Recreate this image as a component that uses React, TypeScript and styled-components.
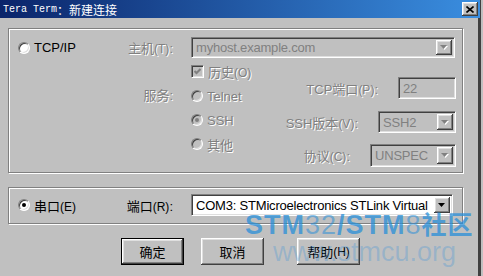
import React from 'react';
import styled, { createGlobalStyle, css } from 'styled-components';

const GlobalStyle = createGlobalStyle`
  html, body {
    margin: 0;
    padding: 0;
    background: #c0c0c0;
  }
  body {
    font-family: "Liberation Sans", "Noto Sans CJK SC", sans-serif;
    font-size: 13px;
    color: #000;
  }
`;

const raised = css`
  background: #c0c0c0;
  box-shadow: inset -1px -1px 0 #404040, inset 1px 1px 0 #ffffff,
    inset -2px -2px 0 #808080, inset 2px 2px 0 #dfdfdf;
`;

const sunken = css`
  box-sizing: border-box;
  border: 1px solid;
  border-color: #808080 #ffffff #ffffff #808080;
  box-shadow: inset 1px 1px 0 #404040, inset -1px -1px 0 #dfdfdf;
`;

const disabledText = css`
  color: #808080;
  text-shadow: 1px 1px 0 #ffffff;
`;

const Frame = styled.div`
  position: relative;
  width: 483px;
  height: 276px;
  box-sizing: border-box;
  background: #c0c0c0;
  border-right: 2px solid #c0c0c0;
  box-shadow: inset -3px 0 0 #404040;
  overflow: hidden;
`;

const TitleBar = styled.div`
  height: 18px;
  margin-right: 1px;
  display: flex;
  align-items: center;
  padding-left: 3px;
  background: linear-gradient(to right, #0a246a, #3a8ee0);
  color: #fff;
`;

const TitleLatin = styled.span`
  font-family: "Liberation Mono", monospace;
  font-size: 10px;
`;

const TitleCjk = styled.span`
  font-family: "Noto Sans CJK SC", sans-serif;
  font-size: 12px;
`;

const CloseButton = styled.div`
  ${raised};
  margin-left: auto;
  margin-right: 2px;
  width: 16px;
  height: 14px;
  display: flex;
  align-items: center;
  justify-content: center;
`;

const Body = styled.div`
  padding: 10px 0 0 8px;
`;

const Group = styled.div<{ $h: number }>`
  box-sizing: border-box;
  width: 455px;
  height: ${p => p.$h}px;
  border: 1px solid #808080;
  box-shadow: 1px 1px 0 #ffffff, inset 1px 1px 0 #ffffff;
  padding-left: 9px;
`;

const TcpGroup = styled(Group)`
  padding-top: 8px;
  display: flex;
  flex-direction: column;
`;

const SerialGroup = styled(Group)`
  margin-top: 14px;
  padding-top: 6px;
`;

const Row = styled.div<{ $h?: number }>`
  display: flex;
  align-items: center;
  height: ${p => p.$h ?? 22}px;
`;

const LeftCell = styled.div`
  width: 100px;
  display: flex;
  align-items: center;
`;

const FieldLabel = styled.div<{ $off?: boolean }>`
  width: 55px;
  margin-right: 18px;
  text-align: right;
  white-space: nowrap;
  ${p => p.$off && disabledText};
`;

const LowerArea = styled.div`
  display: flex;
  padding-left: 100px;
  padding-right: 6px;
`;

const ServiceLabel = styled(FieldLabel)`
  padding-top: 26px;
  line-height: 24px;
`;

const OptionsCol = styled.div`
  display: flex;
  flex-direction: column;
  padding-top: 7px;
`;

const OptionRow = styled.div<{ $h: number; $mt?: number }>`
  display: flex;
  align-items: center;
  height: ${p => p.$h}px;
  margin-top: ${p => p.$mt ?? 0}px;
  white-space: nowrap;
`;

const SettingsCol = styled.div`
  flex: 1;
  display: flex;
  flex-direction: column;
  align-items: flex-end;
`;

const SettingRow = styled.div<{ $mt: number }>`
  display: flex;
  align-items: center;
  gap: 20px;
  margin-top: ${p => p.$mt}px;
  white-space: nowrap;
`;

const OffText = styled.span`
  ${disabledText};
`;

const Small = styled.span`
  font-size: 12px;
`;

const RadioCircle = styled.span<{ $off?: boolean; $on?: boolean }>`
  ${sunken};
  display: inline-flex;
  align-items: center;
  justify-content: center;
  width: 12px;
  height: 12px;
  border-radius: 50%;
  margin-right: 4px;
  flex-shrink: 0;
  background: ${p => (p.$off ? '#c0c0c0' : '#ffffff')};
  &::after {
    content: '';
    display: ${p => (p.$on ? 'block' : 'none')};
    width: 4px;
    height: 4px;
    border-radius: 50%;
    background: ${p => (p.$off ? '#808080' : '#000000')};
  }
`;

const CheckBox = styled.span`
  ${sunken};
  display: inline-flex;
  align-items: center;
  justify-content: center;
  width: 13px;
  height: 13px;
  margin-right: 4px;
  background: #c0c0c0;
`;

const Field = styled.div<{ $w: number; $h?: number; $off?: boolean }>`
  ${sunken};
  width: ${p => p.$w}px;
  height: ${p => p.$h ?? 22}px;
  display: flex;
  align-items: center;
  padding: 2px;
  background: ${p => (p.$off ? '#c0c0c0' : '#ffffff')};
  color: ${p => (p.$off ? '#808080' : '#000000')};
  white-space: nowrap;
  overflow: hidden;
  letter-spacing: -0.2px;
`;

const FieldText = styled.span`
  flex: 1;
  padding-left: 2px;
  overflow: hidden;
`;

const ArrowButton = styled.span`
  ${raised};
  width: 16px;
  align-self: stretch;
  display: flex;
  align-items: center;
  justify-content: center;
  flex-shrink: 0;
`;

const ButtonRow = styled.div`
  display: flex;
  margin-top: 14px;
  padding-left: 113px;
`;

const PushButton = styled.div<{ $default?: boolean; $ml: number }>`
  ${raised};
  box-sizing: border-box;
  width: 63px;
  height: 27px;
  margin-left: ${p => p.$ml}px;
  display: flex;
  align-items: center;
  justify-content: center;
  font-size: 13px;
  ${p =>
    p.$default &&
    css`
      border: 1px solid #000;
    `}
`;

const Watermark = styled.div`
  position: absolute;
  left: 245px;
  top: 212px;
  pointer-events: none;
  font-family: "Liberation Sans", "Noto Sans CJK SC", sans-serif;
  font-size: 27px;
  line-height: 27px;
`;

const MarkLine = styled.div`
  letter-spacing: 1px;
  white-space: nowrap;
`;

const MarkStrong = styled.span`
  font-weight: bold;
  color: rgba(42, 143, 216, 0.75);
`;

const MarkLight = styled.span`
  color: rgba(42, 143, 216, 0.55);
`;

const MarkCjk = styled(MarkStrong)`
  font-size: 25px;
`;

const MarkUrl = styled.div`
  margin-left: 28px;
  color: rgba(70, 150, 215, 0.32);
  white-space: nowrap;
`;

const Arrow = ({ off }: { off?: boolean }) => (
  <svg width="8" height="5" viewBox="0 0 8 5">
    {off && <polygon points="1,1 8,1 4.5,5" fill="#ffffff" />}
    <polygon points="0,0 7,0 3.5,4" fill={off ? '#808080' : '#000000'} />
  </svg>
);

const Select = ({ w, h, off, children }: { w: number; h?: number; off?: boolean; children: React.ReactNode }) => (
  <Field $w={w} $h={h} $off={off}>
    <FieldText>{children}</FieldText>
    <ArrowButton>
      <Arrow off={off} />
    </ArrowButton>
  </Field>
);

const Radio = ({ off, on, children }: { off?: boolean; on?: boolean; children: React.ReactNode }) => (
  <>
    <RadioCircle $off={off} $on={on} />
    {off ? <OffText>{children}</OffText> : <span>{children}</span>}
  </>
);

export default function App() {
  return (
    <>
      <GlobalStyle />
      <Frame>
        <TitleBar>
          <TitleLatin>Tera Term</TitleLatin>
          <TitleCjk>：新建连接</TitleCjk>
          <CloseButton>
            <svg width="8" height="7" viewBox="0 0 8 7">
              <path d="M0.5 0.5 L7.5 6.5 M7.5 0.5 L0.5 6.5" stroke="#000" strokeWidth="1.6" />
            </svg>
          </CloseButton>
        </TitleBar>
        <Body>
          <TcpGroup $h={145}>
            <Row $h={21}>
              <LeftCell>
                <Radio>TCP/IP</Radio>
              </LeftCell>
              <FieldLabel $off>
                主机<Small>(T)</Small>:
              </FieldLabel>
              <Select w={264} h={21} off>
                myhost.example.com
              </Select>
            </Row>
            <LowerArea>
              <ServiceLabel $off>服务:</ServiceLabel>
              <OptionsCol>
                <OptionRow $h={13}>
                  <CheckBox>
                    <svg width="7" height="7" viewBox="0 0 7 7">
                      <polyline points="0.5,3 2.5,5 6.5,1" fill="none" stroke="#808080" strokeWidth="2" />
                    </svg>
                  </CheckBox>
                  <OffText>
                    历史<Small>(O)</Small>
                  </OffText>
                </OptionRow>
                <OptionRow $h={24} $mt={6}>
                  <Radio off>Telnet</Radio>
                </OptionRow>
                <OptionRow $h={24}>
                  <Radio off on>
                    SSH
                  </Radio>
                </OptionRow>
                <OptionRow $h={24}>
                  <Radio off>其他</Radio>
                </OptionRow>
              </OptionsCol>
              <SettingsCol>
                <SettingRow $mt={19}>
                  <OffText>
                    TCP端口<Small>(P)</Small>:
                  </OffText>
                  <Field $w={58} $off>
                    <FieldText>22</FieldText>
                  </Field>
                </SettingRow>
                <SettingRow $mt={12}>
                  <OffText>
                    SSH版本<Small>(V)</Small>:
                  </OffText>
                  <Select w={78} off>
                    SSH2
                  </Select>
                </SettingRow>
                <SettingRow $mt={11}>
                  <OffText>
                    协议<Small>(C)</Small>:
                  </OffText>
                  <Select w={86} h={23} off>
                    UNSPEC
                  </Select>
                </SettingRow>
              </SettingsCol>
            </LowerArea>
          </TcpGroup>
          <SerialGroup $h={37}>
            <Row>
              <LeftCell>
                <Radio on>
                  串口<Small>(E)</Small>
                </Radio>
              </LeftCell>
              <FieldLabel>
                端口<Small>(R)</Small>:
              </FieldLabel>
              <Select w={262}>COM3: STMicroelectronics STLink Virtual</Select>
            </Row>
          </SerialGroup>
          <ButtonRow>
            <PushButton $default $ml={0}>
              确定
            </PushButton>
            <PushButton $ml={17}>取消</PushButton>
            <PushButton $ml={33}>
              帮助<Small>(H)</Small>
            </PushButton>
          </ButtonRow>
        </Body>
        <Watermark>
          <MarkLine>
            <MarkStrong>STM</MarkStrong>
            <MarkLight>32</MarkLight>
            <MarkStrong>/STM</MarkStrong>
            <MarkLight>8</MarkLight>
            <MarkCjk>社区</MarkCjk>
          </MarkLine>
          <MarkUrl>www.stmcu.org</MarkUrl>
        </Watermark>
      </Frame>
    </>
  );
}
